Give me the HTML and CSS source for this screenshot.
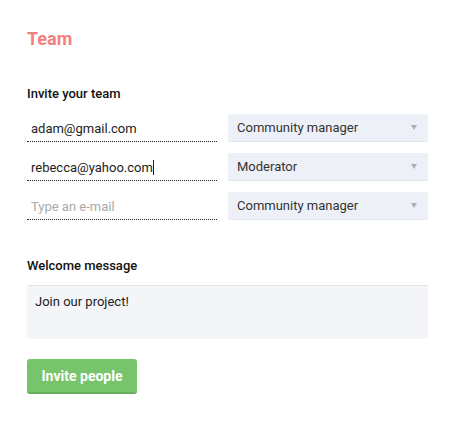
FILE: index.html
```html
<!DOCTYPE html>
<html>
<head>
<meta charset="utf-8">
<link rel="stylesheet" href="styles.css">
</head>
<body>
<div class="page">
  <h1 class="title">Team</h1>
  <h2 class="label invite-label">Invite your team</h2>
  <div class="rows">
    <div class="row">
      <div class="email">adam@gmail.com</div>
      <div class="select"><span>Community manager</span><span class="arrow"></span></div>
    </div>
    <div class="row">
      <div class="email">rebecca@yahoo.com<span class="caret"></span></div>
      <div class="select"><span>Moderator</span><span class="arrow"></span></div>
    </div>
    <div class="row">
      <div class="email placeholder">Type an e-mail</div>
      <div class="select"><span>Community manager</span><span class="arrow"></span></div>
    </div>
  </div>
  <h2 class="label welcome-label">Welcome message</h2>
  <div class="textarea">Join our project!</div>
  <button class="btn">Invite people</button>
</div>
</body>
</html>
```
FILE: styles.css
```css
* { box-sizing: border-box; }
body {
  margin: 0;
  background: #fff;
  font-family: Roboto, "Liberation Sans", sans-serif;
  color: #111;
}
.page {
  padding: 28px 38px 0 27px;
  display: flex;
  flex-direction: column;
}
.title {
  margin: 0;
  font-size: 18px;
  line-height: 22px;
  font-weight: 700;
  color: #f47f7f;
}
.label {
  margin: 0;
  font-size: 13px;
  line-height: 16px;
  font-weight: 500;
  color: #111;
}
.invite-label { margin-top: 36px; }
.rows {
  margin-top: 12px;
  display: flex;
  flex-direction: column;
  gap: 11px;
}
.row {
  display: flex;
  gap: 11px;
  height: 28px;
}
.email {
  width: 190px;
  border-bottom: 1px dotted #222;
  padding: 0 0 0 4px;
  font-size: 13px;
  line-height: 16px;
  padding-top: 7px;
  color: #222;
  display: flex;
  align-items: flex-start;
}
.email.placeholder { color: #aaa; }
.caret {
  display: inline-block;
  width: 1px;
  height: 15px;
  background: #222;
}
.select {
  flex: 1;
  background: #edf0f6;
  border-radius: 3px;
  border-bottom: 1px solid #dfe3ec;
  display: flex;
  justify-content: space-between;
  align-items: center;
  padding: 0 11px 0 9px;
  font-size: 13px;
  color: #333;
}
.arrow {
  width: 0;
  height: 0;
  border-left: 3px solid transparent;
  border-right: 3px solid transparent;
  border-top: 5px solid #aab0ba;
}
.welcome-label { margin-top: 38px; }
.textarea {
  margin-top: 11px;
  height: 54px;
  background: #f4f5f9;
  border-top: 1px solid #e2e4ea;
  border-radius: 3px;
  padding: 8px 8px;
  font-size: 13px;
  line-height: 16px;
  color: #222;
}
.btn {
  margin-top: 20px;
  align-self: flex-start;
  width: 110px;
  height: 35px;
  background: #78c46c;
  border: none;
  border-bottom: 2px solid #69b05e;
  border-radius: 3px;
  color: #fff;
  font-family: Roboto, "Liberation Sans", sans-serif;
  font-size: 14px;
  font-weight: 700;
  padding: 0;
}
```
